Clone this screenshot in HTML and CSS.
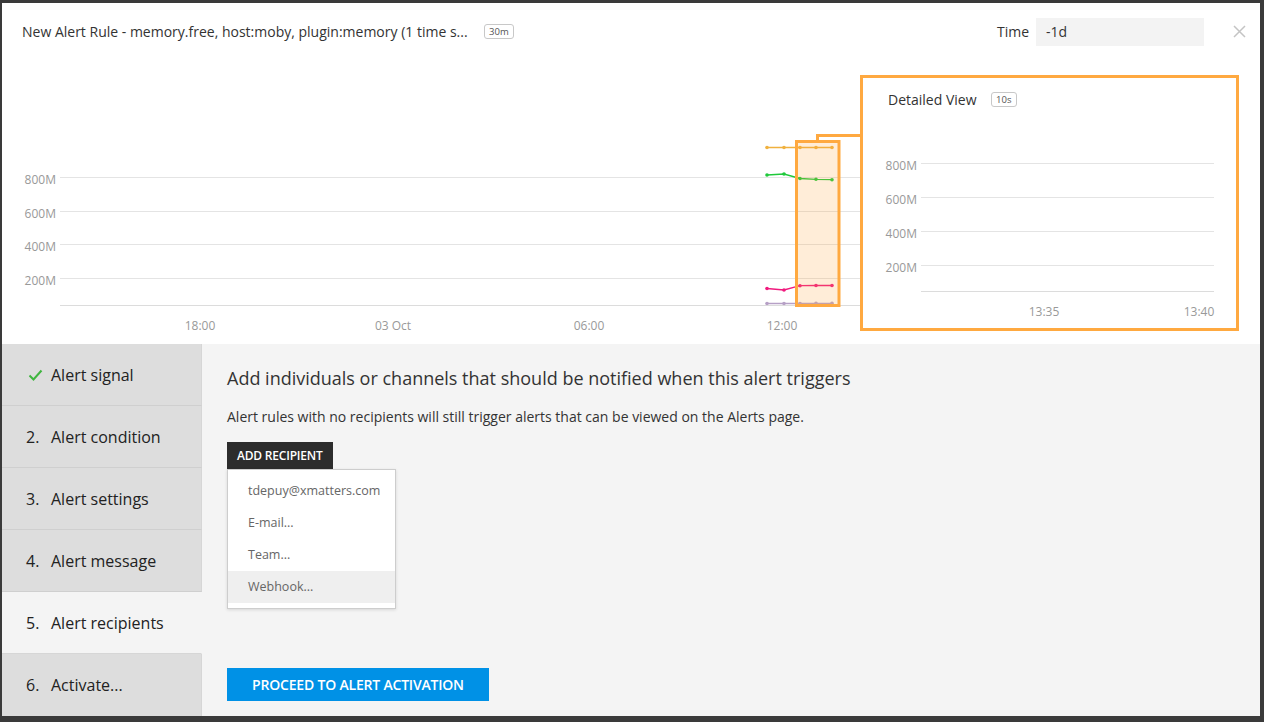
FILE: index.html
```html
<!DOCTYPE html>
<html>
<head>
<meta charset="utf-8">
<link rel="stylesheet" href="styles.css">
</head>
<body>
<div class="modal">
  <header class="head">
    <div class="title">New Alert Rule - memory.free, host:moby, plugin:memory (1 time s... <span class="badge">30m</span></div>
    <div class="time">
      <span class="time-label">Time</span>
      <div class="time-input">-1d</div>
    </div>
    <svg class="close" width="13" height="13" viewBox="0 0 13 13"><path d="M1 1L12 12M12 1L1 12" stroke="#c4c4c4" stroke-width="1.5" fill="none"/></svg>
  </header>

  <div class="chart">
    <svg class="main-chart" width="1258" height="284" viewBox="2 60 1258 284">
      <g stroke="#e4e4e4" stroke-width="1">
        <line x1="60" y1="177.5" x2="860" y2="177.5"/>
        <line x1="60" y1="211.5" x2="860" y2="211.5"/>
        <line x1="60" y1="244.5" x2="860" y2="244.5"/>
        <line x1="60" y1="278.5" x2="860" y2="278.5"/>
        <line x1="60" y1="305.5" x2="860" y2="305.5" stroke="#dcdcdc"/>
      </g>
      <g class="axis" text-anchor="end">
        <text x="56" y="184">800M</text>
        <text x="56" y="218">600M</text>
        <text x="56" y="251">400M</text>
        <text x="56" y="285">200M</text>
      </g>
      <g class="axis" text-anchor="middle">
        <text x="200" y="330">18:00</text>
        <text x="393" y="330">03 Oct</text>
        <text x="589" y="330">06:00</text>
        <text x="782" y="330">12:00</text>
      </g>
      <g fill="none" stroke-width="1.3">
        <polyline stroke="#f0b13e" points="767,147.5 784,147.5 800,147.5 816,147.5 832,147.5"/>
        <polyline stroke="#1fc93b" points="767,175 784,174 800,178.5 816,179.3 832,179.7"/>
        <polyline stroke="#f0197d" points="767,288.5 784,290 800,285.7 816,285.5 832,285.5"/>
        <polyline stroke="#b6a0c6" points="767,303.5 784,303.5 800,303.5 816,303.3 832,303.3"/>
      </g>
      <g fill="#f0b13e">
        <circle cx="767" cy="147.5" r="1.8"/><circle cx="784" cy="147.5" r="1.8"/><circle cx="800" cy="147.5" r="1.8"/><circle cx="816" cy="147.5" r="1.8"/><circle cx="832" cy="147.5" r="1.8"/>
      </g>
      <g fill="#1fc93b">
        <circle cx="767" cy="175" r="1.8"/><circle cx="784" cy="174" r="1.8"/><circle cx="800" cy="178.5" r="1.8"/><circle cx="816" cy="179.3" r="1.8"/><circle cx="832" cy="179.7" r="1.8"/>
      </g>
      <g fill="#f0197d">
        <circle cx="767" cy="288.5" r="1.8"/><circle cx="784" cy="290" r="1.8"/><circle cx="800" cy="285.7" r="1.8"/><circle cx="816" cy="285.5" r="1.8"/><circle cx="832" cy="285.5" r="1.8"/>
      </g>
      <g fill="#b6a0c6">
        <circle cx="767" cy="303.5" r="1.8"/><circle cx="784" cy="303.5" r="1.8"/><circle cx="800" cy="303.5" r="1.8"/><circle cx="816" cy="303.3" r="1.8"/><circle cx="832" cy="303.3" r="1.8"/>
      </g>
      <rect x="796.5" y="141.5" width="42.5" height="164" fill="rgba(255,166,61,0.2)" stroke="#ffa940" stroke-width="3"/>
      <polyline points="817.5,141 817.5,135.5 861,135.5" fill="none" stroke="#ffa940" stroke-width="3"/>
    </svg>

    <div class="detail">
      <svg class="detail-chart" width="373" height="250" viewBox="863 78 373 250">
        <g stroke="#e4e4e4" stroke-width="1">
          <line x1="921" y1="163.5" x2="1214" y2="163.5"/>
          <line x1="921" y1="197.5" x2="1214" y2="197.5"/>
          <line x1="921" y1="231.5" x2="1214" y2="231.5"/>
          <line x1="921" y1="265.5" x2="1214" y2="265.5"/>
          <line x1="921" y1="291.5" x2="1214" y2="291.5" stroke="#dcdcdc"/>
        </g>
        <g class="axis" text-anchor="end">
          <text x="917" y="170">800M</text>
          <text x="917" y="204">600M</text>
          <text x="917" y="238">400M</text>
          <text x="917" y="272">200M</text>
        </g>
        <g class="axis" text-anchor="middle">
          <text x="1044" y="316">13:35</text>
          <text x="1199" y="316">13:40</text>
        </g>
      </svg>
      <div class="detail-head">Detailed View <span class="badge">10s</span></div>
    </div>
  </div>

  <div class="wizard">
    <nav class="steps">
      <div class="step"><svg class="check" width="15" height="12" viewBox="0 0 15 12"><path d="M1.5 6.5L5.5 10.5L13.5 1.5" fill="none" stroke="#3fb53f" stroke-width="2"/></svg><span>Alert signal</span></div>
      <div class="step"><span class="num">2.</span><span>Alert condition</span></div>
      <div class="step"><span class="num">3.</span><span>Alert settings</span></div>
      <div class="step"><span class="num">4.</span><span>Alert message</span></div>
      <div class="step active"><span class="num">5.</span><span>Alert recipients</span></div>
      <div class="step last"><span class="num">6.</span><span>Activate...</span></div>
    </nav>
    <section class="pane">
      <h2 class="pane-title">Add individuals or channels that should be notified when this alert triggers</h2>
      <p class="pane-text">Alert rules with no recipients will still trigger alerts that can be viewed on the Alerts page.</p>
      <div class="add-wrap">
        <button class="add-btn">ADD RECIPIENT</button>
        <ul class="menu">
          <li>tdepuy@xmatters.com</li>
          <li>E-mail...</li>
          <li>Team...</li>
          <li class="hover">Webhook...</li>
        </ul>
      </div>
      <button class="proceed">PROCEED TO ALERT ACTIVATION</button>
    </section>
  </div>
</div>
</body>
</html>
```

FILE: styles.css
```css
html, body {
  margin: 0;
  padding: 0;
}
body {
  background: #3a3a3a;
  font-family: "Open Sans", "Liberation Sans", sans-serif;
  color: #333;
  width: 1264px;
  height: 722px;
  overflow: hidden;
}
.modal {
  margin: 3px 0 0 2px;
  width: 1258px;
  height: 713px;
  background: #fff;
  display: flex;
  flex-direction: column;
}
.head {
  height: 57px;
  display: flex;
  align-items: center;
  padding: 0 14px 0 20px;
  box-sizing: border-box;
}
.title {
  flex: 1;
  font-size: 14px;
  color: #333;
  display: flex;
  align-items: center;
  white-space: nowrap;
}
.badge {
  display: inline-block;
  font-size: 9.5px;
  line-height: 13px;
  padding: 0 4.5px;
  border: 1px solid #c8c8c8;
  border-radius: 3px;
  color: #555;
  margin-left: 16px;
}
.time {
  display: flex;
  align-items: center;
  margin-top: 0;
}
.time-label {
  font-size: 14px;
  margin-right: 7px;
}
.time-input {
  width: 168px;
  height: 28px;
  box-sizing: border-box;
  background: #f3f3f3;
  font-size: 14px;
  line-height: 28px;
  padding-left: 10px;
}
.close {
  margin-left: 29px;
  margin-top: 0;
}
.chart {
  position: relative;
  height: 284px;
}
.main-chart {
  display: block;
}
.axis {
  font-family: "Open Sans", "Liberation Sans", sans-serif;
  font-size: 12px;
  fill: #999;
}
.detail {
  position: absolute;
  left: 858px;
  top: 15px;
  width: 379px;
  height: 256px;
  box-sizing: border-box;
  border: 3px solid #ffa940;
  background: #fff;
}
.detail-chart {
  position: absolute;
  left: 0;
  top: 0;
}
.detail-head {
  position: relative;
  display: flex;
  align-items: center;
  padding: 12px 0 0 25px;
  font-size: 14px;
  color: #333;
  height: 18px;
}
.detail-head .badge {
  margin-left: 14px;
}
.wizard {
  flex: 1;
  display: flex;
  background: #f4f4f4;
}
.steps {
  width: 200px;
  display: flex;
  flex-direction: column;
}
.step {
  height: 62px;
  box-sizing: border-box;
  border-bottom: 1px solid #cfcfcf;
  border-right: 1px solid #d6d6d6;
  background: #dddddd;
  display: flex;
  align-items: center;
  padding-left: 24px;
  font-size: 16px;
  color: #222;
}
.step.active {
  background: #f4f4f4;
  border-right-color: #f4f4f4;
  border-bottom-color: #d6d6d6;
}
.step.last {
  border-bottom: none;
}
.num {
  width: 25px;
}
.check {
  width: 15px;
  margin: 0 8px 0 2px;
}
.pane {
  flex: 1;
  display: flex;
  flex-direction: column;
  align-items: flex-start;
  padding: 22px 25px 15px;
}
.pane-title {
  margin: 0;
  font-size: 18px;
  line-height: 24px;
  font-weight: 400;
  color: #333;
}
.pane-text {
  margin: 17px 0 0;
  font-size: 14px;
  line-height: 20px;
  color: #333;
}
.add-wrap {
  position: relative;
  margin-top: 15px;
}
.add-btn {
  display: block;
  height: 27px;
  padding: 0 10px;
  border: none;
  background: #2c2c2c;
  color: #fff;
  font-family: "Open Sans", "Liberation Sans", sans-serif;
  font-size: 12px;
  font-weight: 600;
  letter-spacing: -0.2px;
}
.menu {
  position: absolute;
  left: 0;
  top: 27px;
  width: 169px;
  box-sizing: border-box;
  margin: 0;
  padding: 5px 0;
  list-style: none;
  background: #fff;
  border: 1px solid #cdcdcd;
  box-shadow: 0 1px 3px rgba(0, 0, 0, 0.12);
}
.menu li {
  height: 32px;
  line-height: 32px;
  padding-left: 20px;
  font-size: 12.5px;
  color: #666;
}
.menu li.hover {
  background: #efefef;
}
.proceed {
  margin-top: auto;
  height: 33px;
  width: 262px;
  border: none;
  background: #0091e6;
  color: #fff;
  font-family: "Open Sans", "Liberation Sans", sans-serif;
  font-size: 14px;
  font-weight: 600;
  letter-spacing: -0.2px;
  padding: 0;
}
```
